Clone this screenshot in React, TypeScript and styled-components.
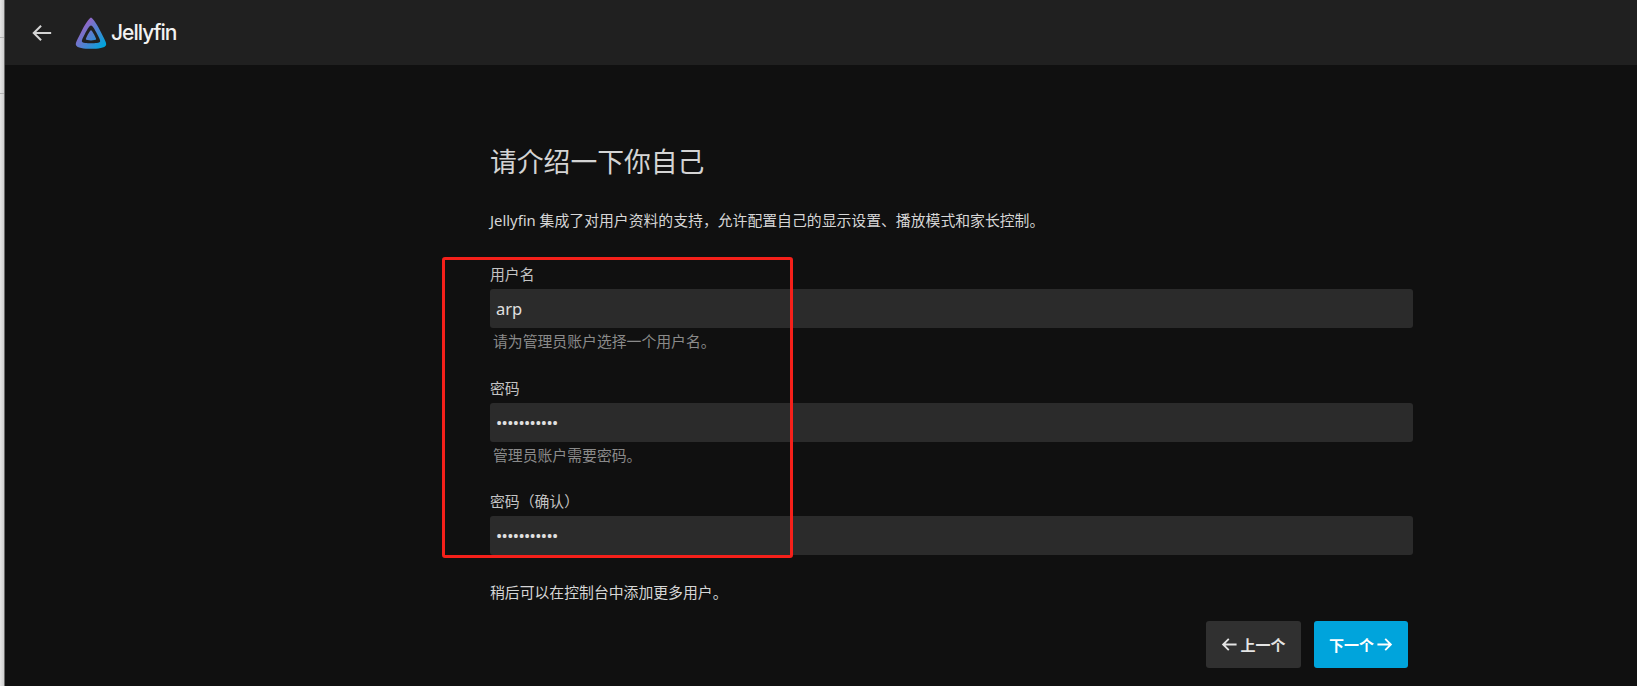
import React from 'react';
import styled, { createGlobalStyle } from 'styled-components';

const CJK = `"Noto Sans", "Noto Sans CJK SC", sans-serif`;

const GlobalStyle = createGlobalStyle`
  html, body {
    margin: 0;
    padding: 0;
    height: 100%;
    background: #101010;
  }
  body {
    font-family: ${CJK};
    color: #d6d6d6;
    overflow: hidden;
  }
`;

const Page = styled.div`
  display: flex;
  width: 1637px;
  height: 686px;
  overflow: hidden;
  position: relative;
`;

const Gutter = styled.div`
  width: 5px;
  flex: none;
  box-sizing: border-box;
  border-right: 1px solid #6a6a6a;
  background:
    linear-gradient(#b4b4b4, #b4b4b4) 0 37px / 100% 1px no-repeat,
    linear-gradient(#b4b4b4, #b4b4b4) 0 93px / 100% 1px no-repeat,
    linear-gradient(90deg, #e6e6e6, #cfcfcf);
`;

const Main = styled.div`
  flex: 1;
  min-width: 0;
`;

const Header = styled.header`
  display: flex;
  align-items: center;
  height: 65px;
  background: #202020;
  padding-left: 26px;
`;

const BackButton = styled.button`
  display: flex;
  padding: 0;
  border: none;
  background: none;
  color: #d4d4d4;
  margin-right: 21px;
`;

const Brand = styled.div`
  display: flex;
  align-items: center;
  gap: 3px;
  font-family: Inter, sans-serif;
  font-size: 21px;
  font-weight: 500;
  letter-spacing: -1px;
  color: #f2f2f2;
`;

const Content = styled.main`
  margin-left: 485px;
  width: 923px;
  padding-top: 78px;
`;

const Title = styled.h1`
  margin: 0 0 29px;
  font-size: 26.8px;
  line-height: 38px;
  font-weight: 400;
  color: #d4d4d4;
`;

const Intro = styled.p`
  margin: 0 0 34px;
  font-size: 14.85px;
  line-height: 20px;
  color: #d6d6d6;
`;

const Field = styled.div<{ $gap: number }>`
  margin-bottom: ${(p) => p.$gap}px;
`;

const Label = styled.label`
  display: block;
  font-size: 14.85px;
  line-height: 21px;
  margin-bottom: 4px;
  color: #c4c4c4;
`;

const Input = styled.input`
  display: block;
  box-sizing: border-box;
  width: 100%;
  height: 39px;
  padding: 0 6px 1px;
  border: none;
  border-radius: 3px;
  background: #2b2b2b;
  color: #e0e0e0;
  font-family: inherit;
  font-size: 16.5px;
  outline: none;

  &[type='password'] {
    letter-spacing: -0.6px;
  }
`;

const Help = styled.div`
  margin: 3px 0 0 3px;
  font-size: 14.85px;
  line-height: 20px;
  color: #8a8a8a;
`;

const Note = styled.p`
  margin: 0 0 19px;
  font-size: 14.85px;
  line-height: 20px;
  color: #d6d6d6;
`;

const Actions = styled.div`
  display: flex;
  justify-content: flex-end;
  gap: 13px;
  padding-right: 5px;
`;

const NavButton = styled.button<{ $primary?: boolean }>`
  display: flex;
  align-items: center;
  justify-content: center;
  gap: 2px;
  height: 47px;
  border: none;
  border-radius: 3px;
  font-family: inherit;
  font-size: 15px;
  font-weight: 700;
  color: ${(p) => (p.$primary ? '#ffffff' : '#e4e4e4')};
  background: ${(p) => (p.$primary ? '#00a4dc' : '#303030')};
  width: ${(p) => (p.$primary ? 94 : 95)}px;
  padding: 0;
`;

const Highlight = styled.div`
  position: absolute;
  left: 442px;
  top: 257px;
  width: 351px;
  height: 301px;
  box-sizing: border-box;
  border: 3px solid #f5201a;
  border-radius: 3px;
  pointer-events: none;
`;

const Arrow = ({ size, dir, weight }: { size: number; dir: 'left' | 'right'; weight: number }) => (
  <svg
    width={size}
    height={size}
    viewBox="0 0 24 24"
    fill="none"
    stroke="currentColor"
    strokeWidth={weight}
    style={dir === 'right' ? { transform: 'scaleX(-1)' } : undefined}
  >
    <path d="M22 12H3M11 4l-8 8 8 8" />
  </svg>
);

const Logo = () => (
  <svg width="34" height="34" viewBox="0 0 32 32">
    <defs>
      <linearGradient id="jf" x1="4" y1="8" x2="28" y2="28" gradientUnits="userSpaceOnUse">
        <stop offset="0" stopColor="#aa5cc3" />
        <stop offset="1" stopColor="#00a4dc" />
      </linearGradient>
    </defs>
    <path
      fillRule="evenodd"
      fill="url(#jf)"
      d="M16 1.500c-1.500 0-6.500 8-9.500 14C4 20.500 1.200 25.200 1.800 27.200c1 3 7.700 3.600 14.200 3.600s13.200-.6 14.200-3.600c.6-2-2.200-6.700-4.700-11.700C22.500 9.500 17.500 1.500 16 1.500zm0 7.500c1.600 0 3.900 4.300 6 8.400 1.500 3 3 5.600 2.600 6.700-.6 1.400-4.600 1.600-8.600 1.600s-8-.2-8.600-1.600c-.4-1.100 1.100-3.700 2.600-6.700 2.100-4.100 4.400-8.400 6-8.400z"
    />
    <path
      fill="url(#jf)"
      d="M16 13.400c-1 0-5.300 7.700-4.800 8.800.5 1 9.100 1 9.600 0 .5-1.100-3.800-8.800-4.800-8.800z"
    />
  </svg>
);

const App: React.FC = () => (
  <>
    <GlobalStyle />
    <Page>
      <Gutter />
      <Main>
        <Header>
          <BackButton type="button" aria-label="back">
            <Arrow size={22} dir="left" weight={2.2} />
          </BackButton>
          <Brand>
            <Logo />
            Jellyfin
          </Brand>
        </Header>
        <Content>
          <Title>请介绍一下你自己</Title>
          <Intro>Jellyfin 集成了对用户资料的支持，允许配置自己的显示设置、播放模式和家长控制。</Intro>
          <Field $gap={27}>
            <Label>用户名</Label>
            <Input type="text" defaultValue="arp" />
            <Help>请为管理员账户选择一个用户名。</Help>
          </Field>
          <Field $gap={26}>
            <Label>密码</Label>
            <Input type="password" defaultValue="12345678901" />
            <Help>管理员账户需要密码。</Help>
          </Field>
          <Field $gap={27}>
            <Label>密码（确认）</Label>
            <Input type="password" defaultValue="12345678901" />
          </Field>
          <Note>稍后可以在控制台中添加更多用户。</Note>
          <Actions>
            <NavButton type="button">
              <Arrow size={17} dir="left" weight={2.6} />
              上一个
            </NavButton>
            <NavButton type="button" $primary>
              下一个
              <Arrow size={17} dir="right" weight={2.6} />
            </NavButton>
          </Actions>
        </Content>
      </Main>
      <Highlight />
    </Page>
  </>
);

export default App;
